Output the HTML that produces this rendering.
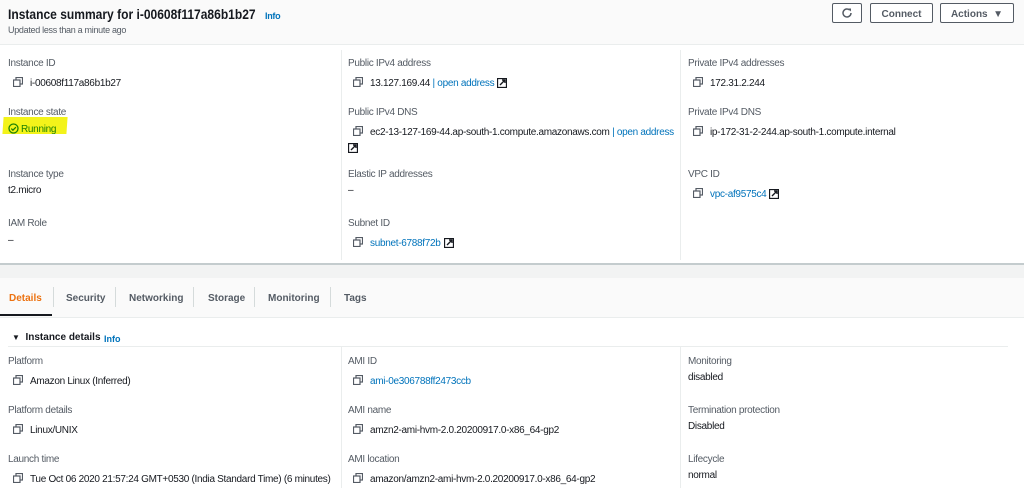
<!DOCTYPE html>
<html><head><meta charset="utf-8"><style>
*{margin:0;padding:0;box-sizing:border-box}
body{width:1024px;height:488px;overflow:hidden;background:#fff;font-family:"Liberation Sans",sans-serif;position:relative;color:#16191f}
.a{position:absolute;white-space:nowrap;font-size:10px;line-height:12px;letter-spacing:-0.3px;transform:translateY(2px)}
.l{color:#545b64}
.lk{color:#0073bb}
.cp{position:absolute;width:10px;height:10px}
.ext{display:inline-block;vertical-align:-2px;margin-left:3px}
.btn{position:absolute;top:3px;height:20px;border:1px solid #545b64;border-radius:2px;background:#fff;font-size:10px;font-weight:bold;color:#545b64;text-align:center;line-height:19px;padding-top:1px}
.vl{position:absolute;width:1px;background:#eaeded}
.tab{position:absolute;top:293px;font-size:10px;font-weight:bold;color:#545b64}
.ts{position:absolute;top:287px;width:1px;height:20px;background:#d5dbdb}
</style></head><body>
<div style="position:absolute;left:0;top:0;width:1024px;height:45px;background:#fafafa;border-bottom:1px solid #eaeded"></div>
<div class="a" style="left:8px;top:4px;font-size:14px;line-height:17px;font-weight:bold;letter-spacing:0;transform:translateY(2px) scaleX(0.86);transform-origin:left">Instance summary for i-00608f117a86b1b27</div>
<div class="a lk" style="left:265px;top:8px;font-size:9px;font-weight:bold">Info</div>
<div class="a l" style="left:8px;top:22px;font-size:9px">Updated less than a minute ago</div>
<div class="btn" style="left:832px;width:30px;padding-top:0"><svg width="12" height="12" viewBox="0 0 12 12" style="margin-top:3px"><path d="M10 6a4 4 0 1 1-1.2-2.9" fill="none" stroke="#545b64" stroke-width="1.5"/><path d="M7 1.5h3v3z" fill="#545b64"/></svg></div>
<div class="btn" style="left:870px;width:63px">Connect</div>
<div class="btn" style="left:940px;width:74px">Actions &nbsp;▼</div>

<div class="vl" style="left:341px;top:50px;height:210px"></div>
<div class="vl" style="left:680px;top:50px;height:210px"></div>

<svg width="0" height="0" style="position:absolute"><defs><g id="c"><rect x="3" y="0.5" width="6.5" height="6.5" fill="#fff" stroke="#545b64" stroke-width="1.2"/><rect x="0.5" y="3" width="6.5" height="6.5" fill="#fff" stroke="#545b64" stroke-width="1.2"/></g><g id="e"><rect x="0.5" y="0.5" width="9" height="9" fill="none" stroke="#16191f" stroke-width="1.3"/><path d="M3 7L8 2M5 2h3v3" fill="none" stroke="#16191f" stroke-width="1.4"/></g></defs></svg>

<!-- col1 -->
<div class="a l" style="left:8px;top:56px">Instance ID</div>
<svg class="cp" style="left:13px;top:77px"><use href="#c"/></svg>
<div class="a" style="left:30px;top:76px">i-00608f117a86b1b27</div>
<div class="a l" style="left:8px;top:105px">Instance state</div>
<div style="position:absolute;left:3px;top:117px;width:64px;height:17px;background:#f3f31a;transform:skewX(-4deg)"></div>
<svg style="position:absolute;left:8px;top:123px" width="11" height="11"><circle cx="5.5" cy="5.5" r="4.5" fill="none" stroke="#1d8102" stroke-width="1.3"/><path d="M3.3 5.6l1.6 1.6 3-3" fill="none" stroke="#1d8102" stroke-width="1.3"/></svg>
<div class="a" style="left:21px;top:122px;color:#1d8102">Running</div>
<div class="a l" style="left:8px;top:167px">Instance type</div>
<div class="a" style="left:8px;top:183px">t2.micro</div>
<div class="a l" style="left:8px;top:216px">IAM Role</div>
<div class="a" style="left:8px;top:233px">–</div>

<!-- col2 -->
<div class="a l" style="left:348px;top:56px">Public IPv4 address</div>
<svg class="cp" style="left:353px;top:77px"><use href="#c"/></svg>
<div class="a" style="left:370px;top:76px">13.127.169.44 <span class="lk">| open address</span><svg class="ext" width="10" height="10"><use href="#e"/></svg></div>
<div class="a l" style="left:348px;top:105px">Public IPv4 DNS</div>
<svg class="cp" style="left:353px;top:126px"><use href="#c"/></svg>
<div class="a" style="left:370px;top:125px">ec2-13-127-169-44.ap-south-1.compute.amazonaws.com <span class="lk">| open address</span></div>
<svg style="position:absolute;left:348px;top:143px" width="10" height="10"><use href="#e"/></svg>
<div class="a l" style="left:348px;top:167px">Elastic IP addresses</div>
<div class="a" style="left:348px;top:183px">–</div>
<div class="a l" style="left:348px;top:216px">Subnet ID</div>
<svg class="cp" style="left:353px;top:237px"><use href="#c"/></svg>
<div class="a lk" style="left:370px;top:236px">subnet-6788f72b<svg class="ext" width="10" height="10"><use href="#e"/></svg></div>

<!-- col3 -->
<div class="a l" style="left:688px;top:56px">Private IPv4 addresses</div>
<svg class="cp" style="left:693px;top:77px"><use href="#c"/></svg>
<div class="a" style="left:710px;top:76px">172.31.2.244</div>
<div class="a l" style="left:688px;top:105px">Private IPv4 DNS</div>
<svg class="cp" style="left:693px;top:126px"><use href="#c"/></svg>
<div class="a" style="left:710px;top:125px">ip-172-31-2-244.ap-south-1.compute.internal</div>
<div class="a l" style="left:688px;top:167px">VPC ID</div>
<svg class="cp" style="left:693px;top:188px"><use href="#c"/></svg>
<div class="a lk" style="left:710px;top:187px">vpc-af9575c4<svg class="ext" width="10" height="10"><use href="#e"/></svg></div>

<!-- divider & tabs -->
<div style="position:absolute;left:0;top:263px;width:1024px;height:2px;background:#c4ccce"></div>
<div style="position:absolute;left:0;top:265px;width:1024px;height:13px;background:#f2f3f3"></div>
<div style="position:absolute;left:0;top:278px;width:1024px;height:40px;background:#fafafa;border-bottom:1px solid #eaeded"></div>
<div style="position:absolute;left:0;top:314px;width:52px;height:2px;background:#16191f"></div>
<div class="tab" style="left:9px;color:#ec7211">Details</div>
<div class="ts" style="left:53px"></div>
<div class="tab" style="left:66px">Security</div>
<div class="ts" style="left:115px"></div>
<div class="tab" style="left:129px">Networking</div>
<div class="ts" style="left:193px"></div>
<div class="tab" style="left:208px">Storage</div>
<div class="ts" style="left:254px"></div>
<div class="tab" style="left:268px">Monitoring</div>
<div class="ts" style="left:330px"></div>
<div class="tab" style="left:344px">Tags</div>

<div class="a" style="left:12px;top:330px;font-weight:bold;color:#16191f;letter-spacing:0"><span style="font-size:8px">▼</span>&nbsp; Instance details</div>
<div class="a lk" style="left:104px;top:331px;font-size:9px;font-weight:bold;letter-spacing:0">Info</div>
<div style="position:absolute;left:8px;top:346px;width:1000px;height:1px;background:#eaeded"></div>
<div class="vl" style="left:341px;top:347px;height:141px"></div>
<div class="vl" style="left:680px;top:347px;height:141px"></div>

<div class="a l" style="left:8px;top:354px">Platform</div>
<svg class="cp" style="left:13px;top:375px"><use href="#c"/></svg>
<div class="a" style="left:30px;top:374px">Amazon Linux (Inferred)</div>
<div class="a l" style="left:8px;top:403px">Platform details</div>
<svg class="cp" style="left:13px;top:424px"><use href="#c"/></svg>
<div class="a" style="left:30px;top:423px">Linux/UNIX</div>
<div class="a l" style="left:8px;top:452px">Launch time</div>
<svg class="cp" style="left:13px;top:473px"><use href="#c"/></svg>
<div class="a" style="left:30px;top:472px">Tue Oct 06 2020 21:57:24 GMT+0530 (India Standard Time) (6 minutes)</div>

<div class="a l" style="left:348px;top:354px">AMI ID</div>
<svg class="cp" style="left:353px;top:375px"><use href="#c"/></svg>
<div class="a lk" style="left:370px;top:374px">ami-0e306788ff2473ccb</div>
<div class="a l" style="left:348px;top:403px">AMI name</div>
<svg class="cp" style="left:353px;top:424px"><use href="#c"/></svg>
<div class="a" style="left:370px;top:423px">amzn2-ami-hvm-2.0.20200917.0-x86_64-gp2</div>
<div class="a l" style="left:348px;top:452px">AMI location</div>
<svg class="cp" style="left:353px;top:473px"><use href="#c"/></svg>
<div class="a" style="left:370px;top:472px">amazon/amzn2-ami-hvm-2.0.20200917.0-x86_64-gp2</div>

<div class="a l" style="left:688px;top:354px">Monitoring</div>
<div class="a" style="left:688px;top:370px">disabled</div>
<div class="a l" style="left:688px;top:403px">Termination protection</div>
<div class="a" style="left:688px;top:419px">Disabled</div>
<div class="a l" style="left:688px;top:452px">Lifecycle</div>
<div class="a" style="left:688px;top:468px">normal</div>
</body></html>
